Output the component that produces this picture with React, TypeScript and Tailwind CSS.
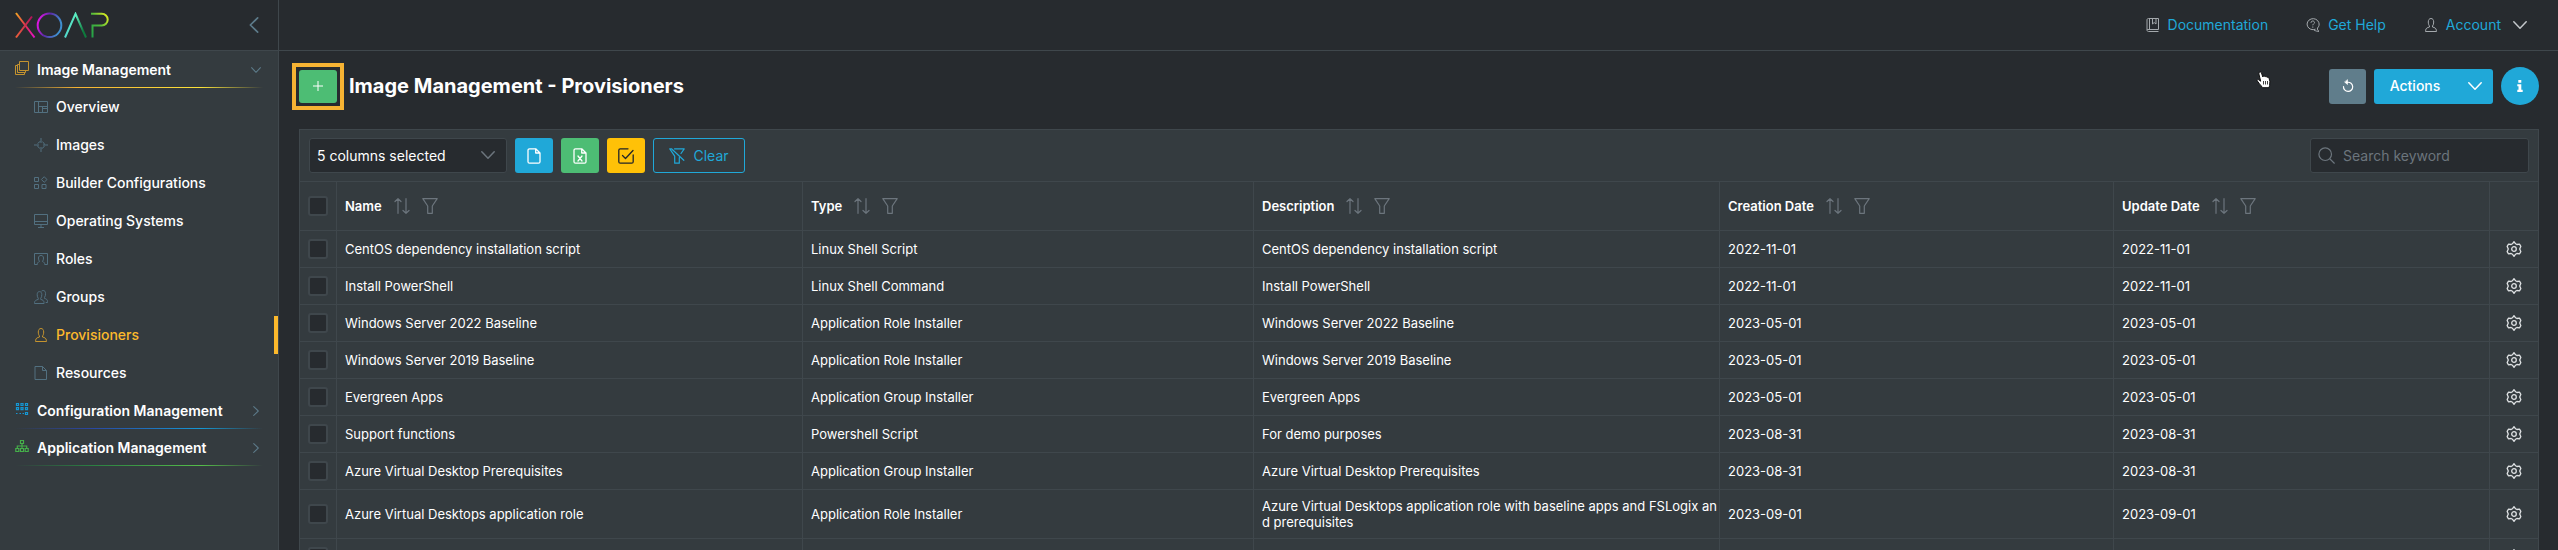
import { useState } from "react";
import type { ReactNode } from "react";

type IconProps = { className?: string };

type Provisioner = {
  name: string;
  type: string;
  description: string;
  created: string;
  updated: string;
};

const provisioners: Provisioner[] = [
  {
    name: "CentOS dependency installation script",
    type: "Linux Shell Script",
    description: "CentOS dependency installation script",
    created: "2022-11-01",
    updated: "2022-11-01",
  },
  {
    name: "Install PowerShell",
    type: "Linux Shell Command",
    description: "Install PowerShell",
    created: "2022-11-01",
    updated: "2022-11-01",
  },
  {
    name: "Windows Server 2022 Baseline",
    type: "Application Role Installer",
    description: "Windows Server 2022 Baseline",
    created: "2023-05-01",
    updated: "2023-05-01",
  },
  {
    name: "Windows Server 2019 Baseline",
    type: "Application Role Installer",
    description: "Windows Server 2019 Baseline",
    created: "2023-05-01",
    updated: "2023-05-01",
  },
  {
    name: "Evergreen Apps",
    type: "Application Group Installer",
    description: "Evergreen Apps",
    created: "2023-05-01",
    updated: "2023-05-01",
  },
  {
    name: "Support functions",
    type: "Powershell Script",
    description: "For demo purposes",
    created: "2023-08-31",
    updated: "2023-08-31",
  },
  {
    name: "Azure Virtual Desktop Prerequisites",
    type: "Application Group Installer",
    description: "Azure Virtual Desktop Prerequisites",
    created: "2023-08-31",
    updated: "2023-08-31",
  },
  {
    name: "Azure Virtual Desktops application role",
    type: "Application Role Installer",
    description:
      "Azure Virtual Desktops application role with baseline apps and FSLogix and prerequisites",
    created: "2023-09-01",
    updated: "2023-09-01",
  },
  { name: "", type: "", description: "", created: "", updated: "" },
];

// 14px line icons
function LineIcon({ className, children }: { className?: string; children: ReactNode }) {
  return (
    <svg
      viewBox="0 0 14 14"
      fill="none"
      stroke="currentColor"
      aria-hidden="true"
      className={`shrink-0 ${className ?? "size-3.5"}`}
    >
      {children}
    </svg>
  );
}

const LayersIcon = ({ className }: IconProps) => (
  <LineIcon className={className}>
    <path d="M4.500.5h9v9h-9zM4.500 3.500h-2v8h8v-2M2.500 4.500h-2v9h9v-2" />
  </LineIcon>
);

const OverviewIcon = ({ className }: IconProps) => (
  <LineIcon className={className}>
    <path d="M.5 1.500h13v11H.5zM4.500 1.500v11M4.500 6.500h9M8.500 6.500v6M8.500 8.500h5" />
  </LineIcon>
);

const TargetIcon = ({ className }: IconProps) => (
  <LineIcon className={className}>
    <circle cx="7" cy="7" r="3.500" strokeDasharray="3.500 2" strokeDashoffset="-1" />
    <path d="M7 0v5M7 9v5M0 7h5M9 7h5" />
  </LineIcon>
);

const WidgetIcon = ({ className }: IconProps) => (
  <LineIcon className={className}>
    <path d="M.5 1.500h4v4h-4zM.5 8.500h4v4h-4zM8 8.500h4v4H8zM10.200.7l2.800 2.800-2.800 2.800L7.400 3.500z" />
  </LineIcon>
);

const DesktopIcon = ({ className }: IconProps) => (
  <LineIcon className={className}>
    <path d="M.5.5h13v10H.5zM.5 7.500h13M7 10.500v3M4 13.500h6" />
  </LineIcon>
);

const RolesIcon = ({ className }: IconProps) => (
  <LineIcon className={className}>
    <path d="M3 12.500H.5v-11h13v11H11" />
    <path d="M3 13c.3-2 1-3 2.500-3.500C4.800 8.500 4.500 7.400 4.500 6c0-1.700 1-2.500 2.500-2.500S9.500 4.300 9.500 6c0 1.400-.3 2.500-1 3.500C10 10 10.700 11 11 13" />
  </LineIcon>
);

const UserIcon = ({ className }: IconProps) => (
  <LineIcon className={className}>
    <path d="M5.500 8C4.600 7 4.300 5.600 4.300 4c0-2.200 1-3.500 2.700-3.500S9.700 1.800 9.700 4c0 1.600-.3 3-1.200 4v1c2.300.6 3.700 1.300 3.800 3.200l.2 1.300h-11l.2-1.300C1.800 10.300 3.200 9.600 5.500 9z" />
  </LineIcon>
);

const GroupIcon = ({ className }: IconProps) => (
  <LineIcon className={className}>
    <path d="M4.300 8.400C3.500 7.500 3.200 6.200 3.200 4.600c0-2 .9-3 2.300-3s2.300 1 2.300 3c0 1.600-.3 2.900-1.100 3.800v1c2 .5 3.200 1.200 3.300 2.900l.1 1.200H.5l.1-1.200c.1-1.700 1.700-2.400 3.700-2.900z" />
    <path d="M7.500 1.200C7.900.8 8.400.5 9.200.5c1.500 0 2.300 1.100 2.300 3.100 0 1.600-.2 2.900-1 3.800v1c1.900.5 2.900 1.200 3 2.900v1.200h-1.800" />
  </LineIcon>
);

const FileIcon = ({ className }: IconProps) => (
  <LineIcon className={className}>
    <path d="M1 .5h7.500L12.500 4.500v9H1zM8.500.5v4h4" />
  </LineIcon>
);

const NodesIcon = ({ className }: IconProps) => (
  <LineIcon className={className}>
    <path
      d="M1.500 1.500h2v2h-2zM6 1.500h2v2H6zM10.500 1.500h2v2h-2zM1.500 5.700h2v2h-2zM6 5.700h2v2H6zM10.500 5.700h2v2h-2zM10.500 10.500h2v2h-2z"
      strokeWidth="1.200"
    />
    <path d="M1 11.500h1.500M4.500 11.500H6M7.500 11.500H9" />
  </LineIcon>
);

const SitemapIcon = ({ className }: IconProps) => (
  <LineIcon className={className}>
    <path
      d="M5.500 1.500h3v3h-3zM.8 9.500h3v3h-3zM5.500 9.500h3v3h-3zM10.200 9.500h3v3h-3zM7 4.500v5M2.300 9.500V7h9.400v2.500"
      strokeWidth="1.200"
    />
  </LineIcon>
);

const BookIcon = ({ className }: IconProps) => (
  <LineIcon className={className}>
    <path d="M12.500 11.500V.5h-10C1.500.5 1 1 1 2v10c0 1 .6 1.500 1.500 1.500h10M1.200 11.500h11.300M3.500.5v11M6.500.5V6l1.700-1.500L10 6V.5" />
  </LineIcon>
);

const HelpIcon = ({ className }: IconProps) => (
  <LineIcon className={className}>
    <path d="M9.500 11.200A6 5.500 0 1 1 12.800 4.500c.7 2 .3 4-1.300 5.500-.3 1.400.2 2.500 1.500 3.300-1.600.2-3.200-.2-5-1.300" />
    <path d="M5 4.800c0-1.200.8-1.800 1.800-1.800s1.700.7 1.700 1.600C8.500 5.800 6.800 5.900 6.800 7.300M6.800 8.500v1.200" />
  </LineIcon>
);

const ChevronIcon = ({ className }: IconProps) => (
  <svg
    viewBox="0 0 14 14"
    fill="none"
    stroke="currentColor"
    strokeLinecap="round"
    strokeLinejoin="round"
    aria-hidden="true"
    className={`shrink-0 ${className ?? "size-3.5"}`}
  >
    <path d="M.8 3.800 7 10.200l6.200-6.400" strokeWidth="1.500" />
  </svg>
);

const SortIcon = () => (
  <svg viewBox="0 0 16 16" fill="none" stroke="currentColor" strokeLinecap="round" strokeLinejoin="round" aria-hidden="true" className="size-4">
    <path d="M4 15.300V.7M1 3.500 4 .7l3 2.800M12 .7v14.600M9 12.500l3 2.800 3-2.800" strokeWidth="1.200" />
  </svg>
);

const FilterIcon = () => (
  <svg viewBox="0 0 16 16" fill="none" stroke="currentColor" strokeLinejoin="round" aria-hidden="true" className="size-4">
    <path d="M.8.7h14.400L10.300 8v7.300H5.700V8z" strokeWidth="1.200" />
  </svg>
);

const FilterSlashIcon = () => (
  <svg viewBox="0 0 16 16" fill="none" stroke="currentColor" strokeLinejoin="round" strokeLinecap="round" aria-hidden="true" className="size-4">
    <path d="M5.500.8h9.700L12 5.500M.8.8l4.900 7.400v7h4.600V9.500M.8.8h1.700l12.300 11.500" strokeWidth="1.200" />
  </svg>
);

const ExportIcon = ({ excel }: { excel?: boolean }) => (
  <svg viewBox="0 0 16 16" fill="none" stroke="currentColor" strokeLinejoin="round" strokeLinecap="round" aria-hidden="true" className="size-4">
    <path
      d="M9.700.8H3.500C2.600.8 2 1.400 2 2.300v11.400c0 .9.6 1.500 1.500 1.500h9c.9 0 1.500-.6 1.500-1.500V5zM9.700.8V5H14"
      strokeWidth="1.300"
    />
    {excel && <path d="m6 8 4 5M10 8l-4 5" strokeWidth="1.300" />}
  </svg>
);

const CheckSquareIcon = () => (
  <svg viewBox="0 0 16 16" fill="none" stroke="currentColor" strokeLinejoin="round" strokeLinecap="round" aria-hidden="true" className="size-4">
    <path d="M10 .8H2.300C1.400.8.8 1.400.8 2.300v11.400c0 .9.6 1.500 1.500 1.500h11.400c.9 0 1.500-.6 1.500-1.500V7" strokeWidth="1.300" />
    <path d="m4.500 7.500 3 3L15 2.500" strokeWidth="1.300" />
  </svg>
);

const RefreshIcon = () => (
  <svg viewBox="0 0 14 14" fill="none" stroke="currentColor" strokeLinecap="round" aria-hidden="true" className="size-3.5">
    <path d="M2.500 7.500A4.600 4.600 0 1 0 6.500 3.300" strokeWidth="1.200" />
    <path d="M6.500 1v4.500L3.800 3.200z" fill="currentColor" strokeWidth=".6" />
  </svg>
);

const SearchIcon = () => (
  <svg viewBox="0 0 17 17" fill="none" stroke="currentColor" strokeLinecap="round" aria-hidden="true" className="size-[17px] shrink-0">
    <circle cx="7.200" cy="7.200" r="6.300" strokeWidth="1.200" />
    <path d="m12 12 4.300 4.200" strokeWidth="1.200" />
  </svg>
);

const GearIcon = () => (
  <svg viewBox="0 0 16 16" fill="none" stroke="currentColor" strokeLinejoin="round" aria-hidden="true" className="size-4">
    <path
      d="M6.400 2.800 8 .7l1.600 2.100 1.300.7 2.700-.3 1.200 2.200-1.100 2.600 1.100 2.600-1.200 2.200-2.700-.3-1.300.7L8 15.300l-1.600-2.100-1.300-.7-2.700.3-1.200-2.200L2.300 8 1.200 5.400l1.200-2.200 2.700.3z"
      strokeWidth="1.300"
    />
    <circle cx="8" cy="8" r="2.300" strokeWidth="1.300" />
  </svg>
);

function Logo() {
  return (
    <svg viewBox="0 0 94 27" fill="none" role="img" aria-label="XOAP" className="h-[27px] w-[94px]">
      <defs>
        <linearGradient id="x-down" x1="0" y1="0" x2="1" y2="1">
          <stop stopColor="#f5a623" />
          <stop offset=".5" stopColor="#e0304e" />
          <stop offset="1" stopColor="#e810c8" />
        </linearGradient>
        <linearGradient id="x-up" x1="0" y1="1" x2="1" y2="0">
          <stop stopColor="#f0603a" />
          <stop offset="1" stopColor="#b0125c" />
        </linearGradient>
        <linearGradient id="o-ring" x1="0" y1="0" x2="1" y2=".3">
          <stop stopColor="#ff10f0" />
          <stop offset=".5" stopColor="#5a2aa8" />
          <stop offset="1" stopColor="#3f8fd0" />
        </linearGradient>
        <linearGradient id="a-stroke" x1="0" y1="0" x2="1" y2=".3">
          <stop stopColor="#45b8d8" />
          <stop offset=".5" stopColor="#5cf0c0" />
          <stop offset="1" stopColor="#0e7a3c" />
        </linearGradient>
        <linearGradient id="p-stroke" x1="0" y1="1" x2="1" y2="0">
          <stop stopColor="#1e9e4a" />
          <stop offset=".5" stopColor="#4cb83c" />
          <stop offset="1" stopColor="#e8f020" />
        </linearGradient>
      </defs>
      <path d="M1 1 19.500 25.500" stroke="url(#x-down)" strokeWidth="2" />
      <path d="M1 25.500 17 4.500" stroke="url(#x-up)" strokeWidth="2" />
      <circle cx="34.500" cy="13.300" r="11.800" stroke="url(#o-ring)" strokeWidth="2" />
      <path d="M50 25.500 60.500 1.800 71 25.500" stroke="url(#a-stroke)" strokeWidth="2" />
      <path d="M77.500 25.500v-12h9.300a5.900 5.900 0 0 0 0-11.800H76" stroke="url(#p-stroke)" strokeWidth="2" />
    </svg>
  );
}

const menuItems = [
  { label: "Overview", icon: OverviewIcon },
  { label: "Images", icon: TargetIcon },
  { label: "Builder Configurations", icon: WidgetIcon },
  { label: "Operating Systems", icon: DesktopIcon },
  { label: "Roles", icon: RolesIcon },
  { label: "Groups", icon: GroupIcon },
  { label: "Provisioners", icon: UserIcon },
  { label: "Resources", icon: FileIcon },
];

type SectionProps = {
  label: string;
  icon: ReactNode;
  line: string;
  open?: boolean;
};

function SectionButton({ label, icon, line, open }: SectionProps) {
  return (
    <button type="button" aria-expanded={!!open} className="flex h-[37px] w-full flex-col px-[15px] text-left">
      <span className="flex w-full flex-1 items-center gap-2 pt-0.5">
        <span className="pb-1">{icon}</span>
        <span className="flex-1 text-sm font-semibold">{label}</span>
        <ChevronIcon className={open ? "size-2.5 mr-0.5 text-[#5c7a89]" : "size-2.5 mr-0.5 -rotate-90 text-[#5c7a89]"} />
      </span>
      <span className={`h-px w-full ${line}`} />
    </button>
  );
}

function Sidebar() {
  return (
    <aside className="flex w-[279px] shrink-0 flex-col border-r border-[#3f474c] bg-[#343b3f]">
      <div className="flex h-[51px] shrink-0 items-center justify-between border-b border-[#3f474c] bg-[#272b2f] pl-[15px] pr-4">
        <Logo />
        <button type="button" aria-label="Collapse menu" className="text-[#5c7a89]">
          <ChevronIcon className="size-4 rotate-90" />
        </button>
      </div>
      <nav>
        <SectionButton
          label="Image Management"
          icon={<LayersIcon className="size-3.5 text-[#c4932f]" />}
          line="bg-[linear-gradient(90deg,transparent,#f6b333_25%,#fbe33a_75%,transparent)]"
          open
        />
        <ul>
          {menuItems.map(({ label, icon: ItemIcon }) => {
            const active = label === "Provisioners";
            return (
              <li key={label}>
                <a
                  href="#"
                  className={`flex h-[38px] items-center gap-2 border-r-4 pl-[34px] text-sm font-medium ${
                    active ? "border-[#fcb92c] text-[#fcb92c]" : "border-transparent"
                  }`}
                >
                  <ItemIcon className={active ? "size-3.5 text-[#c4932f]" : "size-3.5 text-[#527080]"} />
                  {label}
                </a>
              </li>
            );
          })}
        </ul>
        <SectionButton
          label="Configuration Management"
          icon={<NodesIcon className="size-3.5 text-[#1597d4]" />}
          line="bg-[linear-gradient(90deg,transparent,#2a46a0_30%,#1597d4_75%,transparent)]"
        />
        <SectionButton
          label="Application Management"
          icon={<SitemapIcon className="size-3.5 text-[#45b04a]" />}
          line="bg-[linear-gradient(90deg,transparent,#2a7d42_30%,#55bd4a_75%,transparent)]"
        />
      </nav>
    </aside>
  );
}

function TopBar() {
  return (
    <header className="flex h-[51px] shrink-0 items-center justify-end gap-[38px] border-b border-[#3f474c] pr-[31px] text-sm text-[#20a8d8]">
      <a href="#" className="flex items-center gap-2">
        <BookIcon className="size-3.5 text-[#a4a9ad]" />
        Documentation
      </a>
      <a href="#" className="flex items-center gap-2">
        <HelpIcon className="size-3.5 text-[#a4a9ad]" />
        Get Help
      </a>
      <button type="button" className="flex items-center gap-2">
        <UserIcon className="size-3.5 text-[#a4a9ad]" />
        Account
        <ChevronIcon className="ml-1 size-3.5 text-[#c3c7ca]" />
      </button>
    </header>
  );
}

function ColumnHead({ label, width }: { label: string; width: string }) {
  return (
    <th scope="col" className={`h-[49px] border-t border-r border-[#3f474c] px-2 text-left font-semibold ${width}`}>
      <div className="flex items-center gap-3">
        {label}
        <button type="button" aria-label={`Sort by ${label}`} className="text-[#6c757d]">
          <SortIcon />
        </button>
        <button type="button" aria-label={`Filter ${label}`} className="text-[#6c757d]">
          <FilterIcon />
        </button>
      </div>
    </th>
  );
}

const cellClass = "border-t border-r border-[#3f474c] py-2 pl-2 break-all";
const checkboxClass =
  "block size-5 appearance-none rounded-[3px] border-2 border-[#3f474c] bg-[#272b2f] checked:bg-[#20a8d8]";

function ProvisionerTable() {
  const [selected, setSelected] = useState<number[]>([]);
  const toggle = (index: number) =>
    setSelected((prev) => (prev.includes(index) ? prev.filter((i) => i !== index) : [...prev, index]));

  return (
    <table className="w-full table-fixed border-separate border-spacing-0 text-[13px] leading-4">
      <thead>
        <tr>
          <th className="w-[37px] border-t border-r border-[#3f474c] pl-2">
            <input
              type="checkbox"
              aria-label="Select all"
              className={checkboxClass}
              checked={selected.length === provisioners.length}
              onChange={(e) => setSelected(e.target.checked ? provisioners.map((_, i) => i) : [])}
            />
          </th>
          <ColumnHead label="Name" width="w-[466px]" />
          <ColumnHead label="Type" width="w-[451px]" />
          <ColumnHead label="Description" width="w-[466px]" />
          <ColumnHead label="Creation Date" width="w-[394px]" />
          <ColumnHead label="Update Date" width="w-[376px]" />
          <th className="w-12 border-t border-[#3f474c]" />
        </tr>
      </thead>
      <tbody>
        {provisioners.map((row, index) => (
          <tr key={index}>
            <td className="h-[37px] border-t border-r border-[#3f474c] pl-2">
              <input
                type="checkbox"
                aria-label={`Select ${row.name}`}
                className={checkboxClass}
                checked={selected.includes(index)}
                onChange={() => toggle(index)}
              />
            </td>
            <td className={cellClass}>{row.name}</td>
            <td className={cellClass}>{row.type}</td>
            <td className={cellClass}>{row.description}</td>
            <td className={cellClass}>{row.created}</td>
            <td className={cellClass}>{row.updated}</td>
            <td className="border-t border-[#3f474c]">
              <button type="button" aria-label={`Options for ${row.name}`} className="mx-auto block text-[#dfe2e4]">
                <GearIcon />
              </button>
            </td>
          </tr>
        ))}
      </tbody>
    </table>
  );
}

export default function App() {
  return (
    <div className="relative flex h-screen overflow-hidden bg-[#272b2f] font-['Inter',sans-serif] text-white">
      <Sidebar />
      <div className="flex min-w-0 flex-1 flex-col">
        <TopBar />
        <main className="min-h-0 flex-1 overflow-hidden pt-4 pr-[19px] pl-5">
          <div className="mb-6 flex h-[38px] items-center gap-2">
            <div className="relative mr-1">
              <button
                type="button"
                aria-label="Add provisioner"
                className="flex h-[33px] w-[38px] items-center justify-center rounded-[3px] bg-[#4dbd74]"
              >
                <svg viewBox="0 0 10 10" stroke="currentColor" aria-hidden="true" className="size-2.5">
                  <path d="M5 0v10M0 5h10" />
                </svg>
              </button>
              <span className="pointer-events-none absolute -inset-[7px] border-4 border-[#f6b333]" />
            </div>
            <h1 className="flex-1 text-xl font-bold">Image Management - Provisioners</h1>
            <button
              type="button"
              aria-label="Refresh"
              className="flex h-[35px] w-[37px] items-center justify-center rounded-[3px] bg-[#607d8b]"
            >
              <RefreshIcon />
            </button>
            <div className="flex h-[35px] rounded-[3px] bg-[#20a8d8]">
              <button type="button" className="w-[82px] text-sm font-medium">
                Actions
              </button>
              <button type="button" aria-label="More actions" className="flex w-[37px] items-center justify-center">
                <ChevronIcon />
              </button>
            </div>
            <button
              type="button"
              aria-label="Info"
              className="flex size-[38px] items-center justify-center rounded-full bg-[#20a8d8]"
            >
              <svg viewBox="0 0 6 12" fill="currentColor" aria-hidden="true" className="h-3 w-1.5">
                <path d="M1.300 0h3v2.700h-3zM.3 4.300h4v5.500h1.400V12H.3V9.800h1.200V6.300H.3z" />
              </svg>
            </button>
          </div>

          <section className="border border-[#3f474c] bg-[#343b3f]">
            <div className="flex items-center gap-2 px-[9px] py-2 text-sm">
              <div className="relative">
                <select
                  aria-label="Visible columns"
                  className="h-[35px] w-[198px] appearance-none rounded-[3px] border border-[#3f474c] bg-[#272b2f] pl-[7px]"
                >
                  <option>5 columns selected</option>
                </select>
                <ChevronIcon className="pointer-events-none absolute top-2.5 right-3 size-3.5 text-[#6c757d]" />
              </div>
              <button type="button" aria-label="Export CSV" className="flex h-[35px] w-[38px] items-center justify-center rounded-[3px] bg-[#20a8d8]">
                <ExportIcon />
              </button>
              <button type="button" aria-label="Export Excel" className="flex h-[35px] w-[38px] items-center justify-center rounded-[3px] bg-[#4dbd74]">
                <ExportIcon excel />
              </button>
              <button type="button" aria-label="Export selection" className="flex h-[35px] w-[38px] items-center justify-center rounded-[3px] bg-[#ffc107] text-[#212529]">
                <CheckSquareIcon />
              </button>
              <button
                type="button"
                className="flex h-[35px] w-[92px] items-center justify-center gap-2 rounded-[3px] border border-[#20a8d8] text-[#20a8d8]"
              >
                <FilterSlashIcon />
                Clear
              </button>
              <label className="ml-auto flex h-[35px] w-[219px] items-center gap-2 rounded-[3px] border border-[#3f474c] bg-[#272b2f] px-[7px] text-[#6c757d]">
                <SearchIcon />
                <input
                  type="text"
                  aria-label="Search keyword"
                  placeholder="Search keyword"
                  className="w-full min-w-0 bg-transparent text-white outline-none placeholder:text-[#6c757d]"
                />
              </label>
            </div>
            <ProvisionerTable />
          </section>
        </main>
      </div>

      {/* hand pointer */}
      <svg viewBox="0 0 16 18" aria-hidden="true" className="pointer-events-none absolute top-[71px] right-[286px] h-[18px] w-4">
        <path
          d="M3.500 1.200c1-.6 1.700 0 2 .8l1.300 4 .4-.7c.8-.5 1.500-.2 1.900.5.7-.5 1.500-.3 1.900.5.9-.4 1.700 0 2 .9l.9 3-.3 4.300-.6 2.200H6.500c-.6-1.500-2-2.500-3-3.800L1.200 9.800c-.4-1 .7-1.700 1.600-1l1.900 1.400L2.900 3c-.2-.8 0-1.400.6-1.800z"
          fill="#fff"
          stroke="#111"
        />
        <path d="M7.500 10v3.500M9.500 10v3.500M11.500 10v3.500" stroke="#111" strokeWidth=".8" />
      </svg>
    </div>
  );
}
